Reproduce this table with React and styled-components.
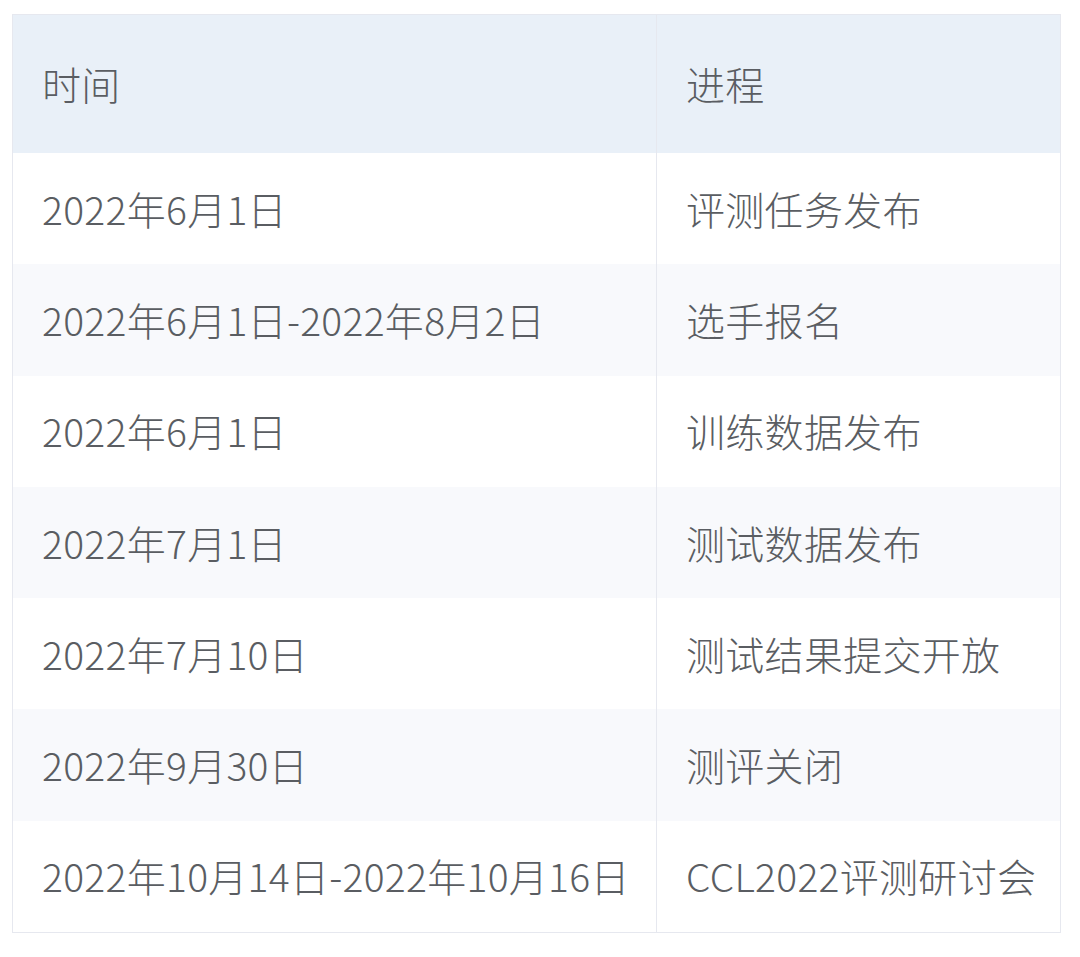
import React from "react";
import styled, { createGlobalStyle } from "styled-components";

const rows = [
  ["2022年6月1日", "评测任务发布"],
  ["2022年6月1日-2022年8月2日", "选手报名"],
  ["2022年6月1日", "训练数据发布"],
  ["2022年7月1日", "测试数据发布"],
  ["2022年7月10日", "测试结果提交开放"],
  ["2022年9月30日", "测评关闭"],
  ["2022年10月14日-2022年10月16日", "CCL2022评测研讨会"],
];

const App = () => {
  return (
    <Page>
      <GlobalStyle />
      <Table>
        <HeadRow>
          <Cell>时间</Cell>
          <Cell $last>进程</Cell>
        </HeadRow>
        {rows.map(([time, step], i) => (
          <Row key={i} $striped={i % 2 === 1}>
            <Cell>{time}</Cell>
            <Cell $last>{step}</Cell>
          </Row>
        ))}
      </Table>
    </Page>
  );
};

export default App;

const GlobalStyle = createGlobalStyle`
  body {
    margin: 0;
    background: #fff;
    font-family: "Noto Sans CJK SC", "Noto Sans", sans-serif;
  }
`;

const Page = styled.div`
  padding: 14px 0 0 12px;
`;

const Table = styled.div`
  width: 1049px;
  border: 1px solid #e6e8ef;
  box-sizing: border-box;
  display: flex;
  flex-direction: column;
`;

const HeadRow = styled.div`
  display: grid;
  grid-template-columns: 644px 1fr;
  height: 138px;
  background: #e9f0f8;
`;

const Row = styled.div`
  display: grid;
  grid-template-columns: 644px 1fr;
  height: 111.3px;
  background: ${(p) => (p.$striped ? "#f8f9fc" : "#fff")};
`;

const Cell = styled.div`
  display: flex;
  align-items: center;
  padding: 0 0 2px 29px;
  font-size: 39px;
  font-weight: 300;
  letter-spacing: 0.3px;
  color: #5a5d62;
  white-space: nowrap;
  border-right: ${(p) => (p.$last ? "none" : "1px solid #e6e8ef")};
`;
